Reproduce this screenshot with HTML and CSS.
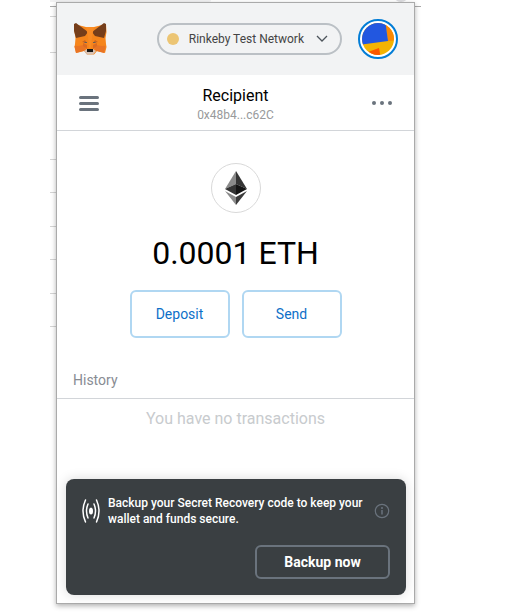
FILE: index.html
```html
<!DOCTYPE html>
<html lang="en">
<head>
<meta charset="utf-8">
<meta name="viewport" content="width=device-width, initial-scale=1">
<title>MetaMask</title>
<link rel="stylesheet" href="styles.css">
</head>
<body>
<svg class="backdrop" width="440" height="340" aria-hidden="true">
  <path d="M50 0h161v1q0 1-3 1H50z" fill="#f1f1f2"/>
  <circle cx="401" cy="-6" r="8" fill="#dddde0"/>
  <path d="M50 6.5h371" stroke="#aaa"/>
  <path d="M50 16.5h7M50 52.5h7M50 159.500h7M50 192.500h7M50 226.500h7M50 259.500h7M50 293.500h7M50 326.500h7" stroke="#d4d4d4"/>
</svg>
<main class="popup">
  <header class="header">
    <svg class="fox" viewBox="0 0 34 32" role="img" aria-label="MetaMask">
      <path d="M1 1l12 3h8l12-3 .5 8-1 6 .5 6 .5 3-1.500 6-8-2-3 3.500h-7l-3-3.500-8 2-1.500-6 .5-3 .5-6-1-6z" fill="#f6851b"/>
      <path d="M1.500 23l10-1 1 5-2 1-7.500 2zM32.500 23l-10-1-1 5 2 1 7.500 2z" fill="#e97424"/>
      <path d="M4 16l8-1 2 8-4-1-6 1zM30 16l-8-1-2 8 4-1 6 1z" fill="#f6851b"/>
      <path d="M10 20l4 2v4l-4-3zM24 20l-4 2v4l4-3z" fill="#dc6a22"/>
      <path d="M1 1l2-1 12 9-3 4-9 2-2-7zM33 1l-2-1-12 9 3 4 9 2 2-7z" fill="#763e1a"/>
      <path d="M13 4h8l-2 10-1 11h-2l-1-11z" fill="#fa8c24"/>
      <path d="M9 19l3-2 2 3zM25 19l-3-2-2 3z" fill="#c86622"/>
      <path d="M11 19h3v1h-2zM23 19h-3v1h2z" fill="#6b5c55"/>
      <path d="M11 28l3-2h6l3 2-3 3.500h-6z" fill="#d7c1b3"/>
      <path d="M14 26h6v3h-6z" fill="#161616"/>
    </svg>
    <button class="network" type="button">
      <span class="network-dot"></span>
      <span class="network-name">Rinkeby Test Network</span>
      <svg class="chevron" viewBox="0 0 12 8" aria-hidden="true"><path d="M1 1l5 5 5-5" fill="none" stroke="#4d545b" stroke-width="1.300"/></svg>
    </button>
    <button class="account" type="button" aria-label="My accounts">
      <svg viewBox="0 0 40 40" aria-hidden="true">
        <defs><clipPath id="disc"><circle cx="20" cy="20" r="16"/></clipPath></defs>
        <circle cx="20" cy="20" r="19" fill="#fff" stroke="#037dd6" stroke-width="2"/>
        <g clip-path="url(#disc)">
          <path d="M0 0h40v40H0z" fill="#f3b302"/>
          <path d="M27 0h13v21l-10 1z" fill="#fc8803"/>
          <path d="M0 0h27l3 22L0 26z" fill="#2257e0"/>
          <path d="M10 33l11-4 2 11H10z" fill="#fb5700"/>
        </g>
      </svg>
    </button>
  </header>

  <section class="menu-bar">
    <button class="icon-button" type="button" aria-label="Menu">
      <svg width="20" height="16" viewBox="0 0 20 16" aria-hidden="true"><path d="M1.500 2.500h17M1.500 8.500h17M1.500 14.500h17" stroke="#6a737d" stroke-width="3" stroke-linecap="round"/></svg>
    </button>
    <button class="selected-account" type="button">
      <span class="account-name">Recipient</span>
      <span class="account-address">0x48b4...c62C</span>
    </button>
    <button class="icon-button" type="button" aria-label="Account options">
      <svg width="20" height="4" viewBox="0 0 20 4" aria-hidden="true"><g fill="#6a737d"><circle cx="2" cy="2" r="2"/><circle cx="10" cy="2" r="2"/><circle cx="18" cy="2" r="2"/></g></svg>
    </button>
  </section>

  <section class="overview">
    <div class="token">
      <svg width="22" height="34" viewBox="0 0 22 34" role="img" aria-label="Ether">
        <path d="M11 0v13L0 18z" fill="#8a8a8a"/>
        <path d="M11 0v13l11 5z" fill="#353535"/>
        <path d="M11 13v11L0 18z" fill="#343434"/>
        <path d="M11 13v11l11-6z" fill="#141414"/>
        <path d="M0 20l11 6v8z" fill="#8a8a8a"/>
        <path d="M22 20l-11 6v8z" fill="#3b3b3b"/>
      </svg>
    </div>
    <h1 class="balance">0.0001 ETH</h1>
    <div class="actions">
      <button class="action" type="button">Deposit</button>
      <button class="action" type="button">Send</button>
    </div>
  </section>

  <section class="history">
    <h2 class="history-title">History</h2>
    <p class="history-empty">You have no transactions</p>
  </section>

  <aside class="backup">
    <div class="backup-message">
      <svg class="signal" viewBox="0 0 18 26" aria-hidden="true">
        <g fill="none" stroke="#fff" stroke-width="1.500" stroke-linecap="round"><path d="M3.500 2Q-1.500 13 3.500 24M14.500 2q5 11 0 22M6 6q-3 7 0 14M12 6q3 7 0 14"/></g>
        <ellipse cx="9" cy="13" rx="2" ry="3.500" fill="#fff"/>
      </svg>
      <p class="backup-text">Backup your Secret Recovery code to keep your wallet and funds secure.</p>
      <svg class="info" viewBox="0 0 16 16" role="img" aria-label="More information">
        <circle cx="8" cy="8" r="6.700" fill="none" stroke="#6a737d" stroke-width="1.200"/>
        <path d="M8 4v2M8 7v4.500" stroke="#6a737d" stroke-width="1.500"/>
      </svg>
    </div>
    <button class="backup-button" type="button">Backup now</button>
  </aside>
</main>
</body>
</html>
```

FILE: styles.css
```css
* { box-sizing: border-box; }

body {
  margin: 0;
  padding: 2px 96px 8px 56px;
  background: #fff;
  color: #000;
  font-family: Roboto, "Liberation Sans", sans-serif;
}

h1, h2, p { margin: 0; font-weight: 400; }

button {
  padding: 0;
  border: 0;
  background: none;
  color: inherit;
  font: inherit;
  cursor: pointer;
}

svg { display: block; flex: none; }

.backdrop { position: absolute; top: 0; left: 0; }

.popup {
  position: relative;
  display: flex;
  flex-direction: column;
  min-height: calc(100vh - 12px);
  border: 1px solid #aaa;
  background: #fff;
  box-shadow: 0 2px 5px rgba(0, 0, 0, 0.3);
}

.header {
  display: flex;
  align-items: center;
  height: 72px;
  padding: 0 16px;
  background: #f2f3f4;
}

.fox { width: 34px; height: 32px; }

.network {
  display: flex;
  align-items: center;
  height: 32px;
  margin-left: auto;
  margin-right: 16px;
  padding: 0 12px 0 8px;
  border: 2px solid #bbc0c5;
  border-radius: 16px;
  color: #444;
  font-size: 12px;
}

.network-dot {
  width: 12px;
  height: 12px;
  margin-right: 10px;
  border-radius: 50%;
  background: #ecc574;
}

.chevron { width: 12px; height: 8px; margin-left: 12px; }

.account { width: 40px; height: 40px; }

.menu-bar {
  display: flex;
  align-items: center;
  justify-content: space-between;
  height: 56px;
  padding: 0 22px;
  border-bottom: 1px solid #d2d5d9;
}

.icon-button { display: grid; place-items: center; height: 32px; }

.selected-account {
  display: flex;
  flex-direction: column;
  align-items: center;
  padding-top: 4px;
}

.account-name { font-size: 16px; line-height: 20px; }

.account-address { color: #989a9b; font-size: 12px; line-height: 18px; }

.overview {
  display: flex;
  flex-direction: column;
  align-items: center;
  padding-top: 32px;
}

.token {
  display: grid;
  place-items: center;
  width: 50px;
  height: 50px;
  border: 1px solid #d9d9d9;
  border-radius: 50%;
}

.balance { margin-top: 16px; font-size: 32px; line-height: 48px; }

.actions { display: flex; gap: 12px; margin-top: 13px; }

.action {
  width: 100px;
  height: 48px;
  border: 2px solid #b0d7f2;
  border-radius: 6px;
  color: #0d70c8;
  font-size: 14px;
}

.history { margin-top: 24px; }

.history-title {
  padding: 8px 16px;
  border-bottom: 1px solid #d2d5d9;
  color: #888c93;
  font-size: 14px;
  line-height: 20px;
}

.history-empty {
  padding-top: 8px;
  color: #c8cbce;
  font-size: 16px;
  line-height: 24px;
  text-align: center;
}

.backup {
  display: flex;
  flex-direction: column;
  align-items: flex-end;
  justify-content: space-between;
  min-height: 116px;
  margin: auto 8px 8px 9px;
  padding: 16px;
  border-radius: 8px;
  background: #3a3f42;
  color: #fff;
  box-shadow: 0 0 12px rgba(0, 0, 0, 0.15);
}

.backup-message { display: flex; gap: 8px; align-items: center; align-self: stretch; }

.signal { width: 18px; height: 26px; }

.backup-text {
  flex: 1;
  font-size: 12px;
  font-weight: 500;
  line-height: 16px;
}

.info { width: 16px; height: 16px; }

.backup-button {
  width: 135px;
  height: 34px;
  border: 2px solid #6a737d;
  border-radius: 6px;
  font-size: 14px;
  font-weight: 700;
}
```
